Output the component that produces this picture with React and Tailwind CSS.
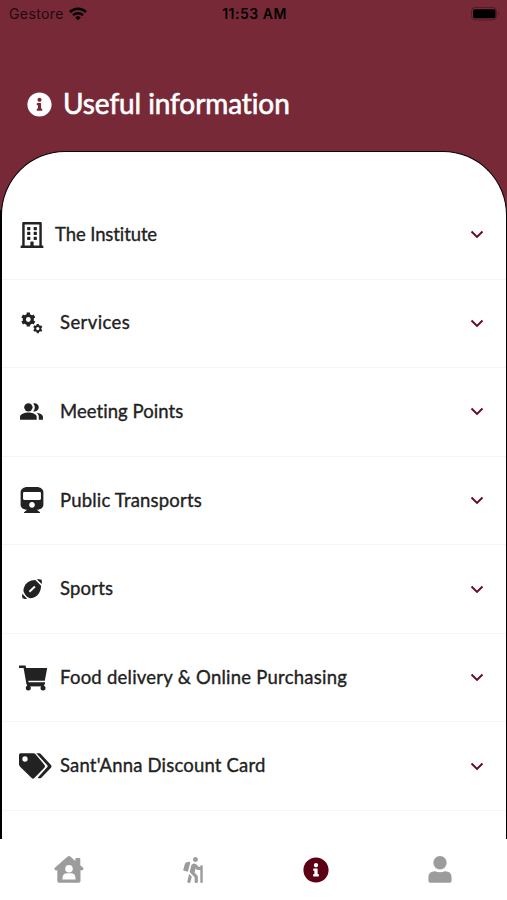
import { FaHiking, FaInfoCircle, FaRegBuilding, FaTrain } from 'react-icons/fa';
import { MdPeopleAlt } from 'react-icons/md';

const Cogs = () => (
  <svg width="22" height="22" viewBox="0 0 22 22" fill="none" stroke="currentColor">
    <circle cx="7.3" cy="7.5" r="4" strokeWidth="3.2" />
    <path d="M7.3 .4V3.400M7.3 11.600V14.600M1.150 3.950L3.750 5.450M10.850 9.550L13.450 11.050M1.150 11.050L3.750 9.550M10.850 5.450L13.450 3.950" strokeWidth="3.3" />
    <circle cx="16.8" cy="16.6" r="2.6" strokeWidth="1.9" />
    <path d="M16.800 12V14M16.800 19.200V21.200M12.800 14.300L14.500 15.300M19.100 17.900L20.800 18.900M12.800 18.900L14.500 17.900M19.100 15.300L20.800 14.300" strokeWidth="2.200" />
  </svg>
);

const Football = () => (
  <svg width="20" height="20" viewBox="0 0 20 20" fill="currentColor">
    <path d="M1.400 11.600C1.700 5.300 6.500 1.100 13.300.9L19.100 6.700C18.900 14.200 14.300 19.100 8 19.300C5.200 18.700 1.900 15 1.400 11.600Z" />
    <path d="M14.900.4C16.600 0 18.800.2 19.400.7S20 3.500 19.700 5.100ZM.3 14.800C0 16.400.1 18.500.6 19.300S3.300 20 5.100 19.700Z" />
    <path d="M7.400 12.700L12.900 7.500" stroke="#fff" strokeWidth="1.900" fill="none" />
  </svg>
);

const Cart = () => (
  <svg width="29" height="26" viewBox="0 0 29 26" fill="currentColor">
    <path d="M0 .5H6.500L7.200 3H28.200L25.800 15.700H9.300L9.600 17.200H26V19.400H7.500L4.600 3H0Z" />
    <circle cx="9.300" cy="22.900" r="2.500" />
    <circle cx="24" cy="22.900" r="2.500" />
    <path d="M8 19H25V21.400H8Z" />
  </svg>
);

const Tags = () => (
  <svg width="33" height="26" viewBox="55 338 99 78" fill="currentColor">
    <path fillRule="evenodd" d="M60 339H98Q103 339 106 343L131 373Q135 378 131 382L101 413Q97 417 93 413L59 380Q55 376 55 372V344Q55 339 60 339ZM73 348A8 8 0 1 0 73 364A8 8 0 1 0 73 348Z" />
    <path d="M107 339H116Q119 339 121 342L151 374Q154 378 151 382L122 412Q117 416 111 412L140 380Q142 378 140 375Z" />
  </svg>
);

const HouseUser = () => (
  <svg width="30" height="27" viewBox="0 0 30 27" fill="currentColor">
    <path fillRule="evenodd" d="M13.400.7Q15 -.500 16.600.7L21.300 4.900V2.800Q21.300 2 22.200 2H25.400Q26.300 2 26.300 2.800V9.300L29.100 11.800Q30 12.800 29 13.800T27 14.300L26.500 13.900V25Q26.500 26.700 24.800 26.700H5Q3.300 26.700 3.300 25V13.900L2.800 14.300Q1.800 14.800.9 13.800T.8 11.800ZM15 8.900A3.800 3.800 0 1 0 15 16.500A3.800 3.800 0 1 0 15 8.900ZM8.400 23.500H21.600Q21.600 17.300 17.500 17.300H12.500Q8.400 17.300 8.400 23.500Z" />
  </svg>
);

const User = () => (
  <svg width="24" height="27" viewBox="0 0 24 27" fill="currentColor">
    <circle cx="12" cy="6.700" r="6.700" />
    <path d="M.4 21.500Q.4 15.200 7 15.200Q12 17.200 17 15.200Q23.600 15.200 23.600 21.500V24.800Q23.600 26.700 21.700 26.700H2.300Q.4 26.700.4 24.800Z" />
  </svg>
);

const Chevron = () => (
  <svg className="text-[#640d24]" width="14" height="9" viewBox="0 0 14 9" fill="none" stroke="currentColor" strokeWidth="2">
    <path d="M1.500 1.500L7 6.900L12.500 1.500" />
  </svg>
);

const sections = [
  { label: 'The Institute', icon: <FaRegBuilding size={26} />, className: 'pl-[53px] tracking-[-0.1px]' },
  { label: 'Services', icon: <Cogs />, className: 'pl-[58px] tracking-[0.4px]' },
  { label: 'Meeting Points', icon: <MdPeopleAlt size={25} />, className: 'pl-[58px] tracking-[0.05px]' },
  { label: 'Public Transports', icon: <FaTrain size={26} />, className: 'pl-[58px] tracking-[0.19px]' },
  { label: 'Sports', icon: <Football />, className: 'pl-[58px] tracking-[0.2px]' },
  { label: 'Food delivery & Online Purchasing', icon: <Cart />, className: 'pl-[58px] tracking-[0.24px]', wide: true },
  { label: "Sant'Anna Discount Card", icon: <Tags />, className: 'pl-[58px] tracking-[0.18px]', wide: true },
];

const tabs = [
  { name: 'Home', icon: <HouseUser />, active: false },
  { name: 'Tours', icon: <FaHiking size={26} />, active: false },
  { name: 'Info', icon: <FaInfoCircle size={26} />, active: true },
  { name: 'Profile', icon: <User />, active: false },
];

const StatusBar = () => (
  <div className="grid h-[27px] grid-cols-3 items-center pl-[9px] pr-[7px] font-[Inter,sans-serif] text-[14px] text-black">
    <div className="flex items-center gap-[5px]">
      <span className="tracking-[0.4px] opacity-75">Gestore</span>
      <svg width="18" height="14" viewBox="0 0 18 14" fill="none" stroke="currentColor" strokeWidth="2.5">
        <path d="M1 5C5.500.6 12.500.6 17 5M4 8.200c2.800-2.700 7.200-2.700 10 0" />
        <path d="M6.200 10.400c1.700-1.500 3.900-1.500 5.600 0L9 13.200Z" fill="currentColor" stroke="none" />
      </svg>
    </div>
    <span className="text-center font-semibold tracking-[0.5px]">11:53 AM</span>
    <svg className="justify-self-end" width="29" height="14" viewBox="0 0 29 14">
      <rect x=".5" y=".5" width="25" height="12.500" rx="3.500" fill="none" stroke="#000" strokeOpacity=".3" />
      <rect x="2" y="2.300" width="22.500" height="9" rx="1.500" />
      <path d="M27 4.800q2 2 0 4z" fillOpacity=".35" />
    </svg>
  </div>
);

const Section = ({ label, icon, className, wide }) => (
  <div className={`relative flex h-[88.57px] shrink-0 items-center border-b border-[#f5f5f5] pr-[22px] ${className}`}>
    <span className={`absolute left-0 flex text-[#222] ${wide ? 'pl-[17px]' : 'w-[59px] justify-center'}`}>{icon}</span>
    <span className="flex-1 whitespace-nowrap text-[#222] [-webkit-text-stroke:0.35px_#222]">{label}</span>
    <Chevron />
  </div>
);

export default function App() {
  return (
    <div className="flex h-[900px] w-[507px] flex-col overflow-hidden bg-white font-[Lato,sans-serif]">
      <main className="flex min-h-0 flex-1 flex-col bg-[linear-gradient(#782938_210px,#000_210px)]">
        <StatusBar />
        <header className="flex h-[124px] items-center gap-[11px] pl-[27px] pt-[30px] text-white">
          <FaInfoCircle size={25} />
          <h1 className="-mt-[3px] text-[28px] leading-8 tracking-[-0.1px] [-webkit-text-stroke:0.6px_white]">Useful information</h1>
        </header>
        <div className="ml-px flex min-h-0 flex-1 flex-col overflow-hidden rounded-t-[64px] border border-b-0 border-black bg-white pt-[39px] text-[18.5px]">
          {sections.map((section) => (
            <Section key={section.label} {...section} />
          ))}
        </div>
      </main>
      <nav className="flex h-[61px] shrink-0 justify-center bg-white pl-[2px]">
        {tabs.map(({ name, icon, active }) => (
          <button key={name} aria-label={name} className={`flex w-[123.4px] items-center justify-center ${active ? 'text-[#5c0015]' : 'text-[#9c9c9c]'}`}>
            {icon}
          </button>
        ))}
      </nav>
    </div>
  );
}
